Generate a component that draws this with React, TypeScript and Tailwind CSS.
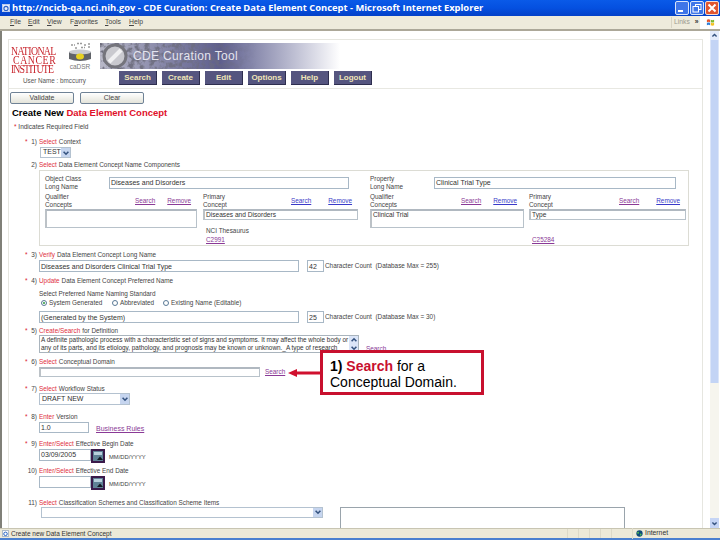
import React from "react";

const navItems = ["Search", "Create", "Edit", "Options", "Help", "Logout"];
const menuItems = [
  { label: "File", u: 0, w: "w-[18px]" },
  { label: "Edit", u: 0, w: "w-[19px]" },
  { label: "View", u: 0, w: "w-[23px]" },
  { label: "Favorites", u: 1, w: "w-[35px]" },
  { label: "Tools", u: 0, w: "w-[24px]" },
  { label: "Help", u: 0, w: "w-[20px]" },
];

const inputCls =
  "border border-[#a8b8c6] bg-white text-[7px] leading-none text-[#333] px-[1px] flex items-center whitespace-nowrap overflow-hidden";
const boxCls =
  "border border-[#b8c2ca] border-t-2 border-l-2 border-t-[#b0b8c0] border-l-[#bcc2c7] bg-white text-[6.6px] leading-[8px] text-[#333] px-[1px]";

const Visited = ({ children }: { children: React.ReactNode }) => (
  <span className="underline text-[#8a3a96]">{children}</span>
);
const Blue = ({ children }: { children: React.ReactNode }) => (
  <span className="underline text-[#3a3ac8]">{children}</span>
);

// the numbered label above each form field
const Label = ({
  num,
  req,
  verb,
  text,
  className,
}: {
  num: string;
  req?: boolean;
  verb: string;
  text: string;
  className: string;
}) => (
  <div className={`flex items-center text-[6.4px] leading-none text-[#444] whitespace-nowrap ${className}`}>
    <span className="w-[6px] text-[#d8202c]">{req ? "*" : ""}</span>
    <span className="w-[6px] flex justify-end">{num}</span>
    <span className="ml-[2px] text-[#e03040]">{verb}</span>
    <span className="ml-[2px]">{text}</span>
  </div>
);

const Chevron = ({ className }: { className: string }) => (
  <svg viewBox="0 0 10 10" className={className} fill="none" stroke="#34527f" strokeWidth="2">
    <path d="M2 3.5 L5 6.5 L8 3.5" />
  </svg>
);

const Select = ({ text, className }: { text: string; className: string }) => (
  <div className={`flex items-center border border-[#b4c2d0] bg-white text-[7px] text-[#333] ${className}`}>
    <span className="flex-1 pl-[2px] whitespace-nowrap overflow-hidden">{text}</span>
    <span className="w-[9px] self-stretch bg-[#c6d5ef] flex items-center justify-center">
      <Chevron className="w-[8px] h-[8px]" />
    </span>
  </div>
);

const CalendarButton = () => (
  <div className="w-[14px] h-[14px] border-2 border-[#3a1a4a] bg-[#5f8296] flex items-end justify-end">
    <svg viewBox="0 0 10 10" className="w-[10px] h-[10px]">
      <rect x="1" y="1" width="8" height="3" fill="#b8d0dc" />
      <path d="M4 9 L7 5.5 L10 9 Z" fill="#101820" />
    </svg>
  </div>
);

const Concepts = ({
  q,
  p,
  code,
  thesaurus,
  qLabelW,
  pLabelW,
  qW,
  pW,
  gap,
  qLinks,
  pLinks,
}: {
  q: string;
  p: string;
  code: string;
  thesaurus?: boolean;
  qLabelW: string;
  pLabelW: string;
  qW: string;
  pW: string;
  gap: string;
  qLinks: React.ReactNode;
  pLinks: React.ReactNode;
}) => (
  <div className={`flex ${gap} mt-[4px] text-[6.4px] leading-[8px] text-[#444]`}>
    <div className={`flex flex-col ${qW}`}>
      <div className="flex items-center h-[16px]">
        <span className={qLabelW}>
          Qualifier
          <br />
          Concepts
        </span>
        {qLinks}
      </div>
      <div className={`${boxCls} h-[19px]`}>{q}</div>
    </div>
    <div className={`flex flex-col ${pW}`}>
      <div className="flex items-center h-[16px]">
        <span className={pLabelW}>
          Primary
          <br />
          Concept
        </span>
        {pLinks}
      </div>
      <div className={`${boxCls} h-[11px]`}>{p}</div>
      <div className="h-[8px] mt-[7px] pl-[3px]">{thesaurus ? "NCI Thesaurus" : ""}</div>
      <div className="h-[8px] mt-[1px] pl-[3px]">
        <Visited>{code}</Visited>
      </div>
    </div>
  </div>
);

const TitleBar = () => (
  <div className="h-[16px] flex items-center bg-gradient-to-b from-[#0a5ae8] via-[#0550e0] to-[#0441c8] shrink-0">
    <svg viewBox="0 0 10 10" className="w-[8px] h-[8px] ml-[2px]">
      <rect x="0.5" y="0.5" width="9" height="9" fill="#e8eefc" stroke="#c8d4ee" />
      <circle cx="5" cy="5.5" r="2.6" fill="none" stroke="#2a60c8" strokeWidth="1.4" />
    </svg>
    <span
      className="ml-[2px] flex-1 text-[9.4px] font-bold text-white whitespace-nowrap"
      style={{ fontFamily: '"Open Sans", sans-serif' }}
    >
      http://ncicb-qa.nci.nih.gov - CDE Curation: Create Data Element Concept - Microsoft Internet Explorer
    </span>
    <div className="flex gap-[1px] pr-[1px]">
      <div className="w-[14px] h-[14px] rounded-[2px] bg-[#3f76e8] border border-[#d8e4fa] flex items-end pl-[2px] pb-[2px]">
        <div className="w-[5px] h-[2px] bg-white" />
      </div>
      <div className="w-[14px] h-[14px] rounded-[2px] bg-[#3f76e8] border border-[#d8e4fa] flex items-center justify-center">
        <svg viewBox="0 0 10 10" className="w-[10px] h-[10px]" fill="none" stroke="#fff" strokeWidth="1">
          <rect x="3.5" y="1.5" width="5.5" height="5" />
          <rect x="1" y="3.5" width="5.5" height="5.5" fill="#3f76e8" />
        </svg>
      </div>
      <div className="w-[14px] h-[14px] rounded-[2px] bg-[#e0552f] border border-[#f5dcd2] flex items-center justify-center">
        <svg viewBox="0 0 10 10" className="w-[10px] h-[10px]" fill="none" stroke="#fff" strokeWidth="2">
          <path d="M1.5 1.5 L8.5 8.5 M8.5 1.5 L1.5 8.5" />
        </svg>
      </div>
    </div>
  </div>
);

const MenuBar = () => (
  <div className="h-[15px] flex items-center bg-[#eeebdc] border-b-2 border-[#aca899] shrink-0 text-[6.8px] text-[#444]">
    <div className="flex pl-[10px] flex-1">
      {menuItems.map((m) => (
        <span key={m.label} className={m.w}>
          {m.label.slice(0, m.u)}
          <span className="underline">{m.label[m.u]}</span>
          {m.label.slice(m.u + 1)}
        </span>
      ))}
    </div>
    <span className="text-[#9a9a90] border-l border-[#d8d4c4] pl-[2px] w-[29px]">
      Links <b className="text-[#333] ml-[3px]">»</b>
    </span>
    <div className="w-[20px] h-full bg-white flex items-center justify-center">
      <svg viewBox="0 0 10 10" className="w-[9px] h-[9px]">
        <path d="M1 2 Q3 1 4.6 2 V4.6 Q3 3.6 1 4.6Z" fill="#e8552a" />
        <path d="M5.4 2 Q7 3 9 2 V4.6 Q7 5.6 5.4 4.6Z" fill="#7cb82f" />
        <path d="M1 5.4 Q3 4.4 4.6 5.4 V8 Q3 7 1 8Z" fill="#2f7fd8" />
        <path d="M5.4 5.4 Q7 6.4 9 5.4 V8 Q7 9 5.4 8Z" fill="#f4c020" />
      </svg>
    </div>
  </div>
);

const Logos = () => (
  <div className="flex h-[31px] pt-[3px]">
    <div
      className="ml-[2px] w-[46px] text-[#c8242c] text-[9.8px] leading-[7px] tracking-[-0.6px] pt-[2px] scale-y-[1.3] origin-top whitespace-nowrap"
      style={{ fontFamily: '"Liberation Serif", serif' }}
    >
      <div>NATIONAL</div>
      <div className="ml-[2px] tracking-[0.6px]">CANCER</div>
      <div className="tracking-[-0.9px]">INSTITUTE</div>
    </div>
    <div className="ml-[11px] w-[24px] flex flex-col items-center -mt-[1px]">
      <svg viewBox="0 0 24 21" className="w-[24px] h-[21px]">
        <path d="M3 3 h4 M9 1.5 h5 M16 3 h3 M21 1 v5 M7 6 h3 M13 5.5 h4" stroke="#9a9a9a" strokeWidth="1.5" fill="none" strokeDasharray="2 1" />
        <path d="M1 10 H23 V17 Q12 21 1 17Z" fill="#5f6268" />
        <ellipse cx="12" cy="10" rx="11" ry="2.5" fill="#c8cace" />
        <ellipse cx="12" cy="14.5" rx="4" ry="3" fill="#e6d020" />
      </svg>
      <span className="text-[6.5px] leading-[7px] text-[#777]">caDSR</span>
    </div>
    <div className="ml-[8px] relative w-[240px] h-[26px] overflow-hidden bg-gradient-to-r from-[#b8b8c8] via-[#5e5e8c] to-white flex items-center">
      <svg className="absolute inset-0 w-full h-full" viewBox="0 0 240 26">
        <defs>
          <filter id="grain">
            <feTurbulence type="fractalNoise" baseFrequency="0.2" numOctaves="3" seed="4" />
            <feColorMatrix values="0 0 0 0 0.15  0 0 0 0 0.15  0 0 0 0 0.2  4 0 0 0 -1.7" />
          </filter>
          <linearGradient id="fade" x1="0" x2="1">
            <stop offset="0" stopColor="#fff" stopOpacity="1" />
            <stop offset="0.42" stopColor="#fff" stopOpacity="0.7" />
            <stop offset="0.65" stopColor="#fff" stopOpacity="0" />
          </linearGradient>
          <mask id="fadeMask">
            <rect width="240" height="26" fill="url(#fade)" />
          </mask>
        </defs>
        <g mask="url(#fadeMask)">
          <rect width="240" height="26" filter="url(#grain)" />
        </g>
        <circle cx="15" cy="13" r="11" fill="#c9c9cf" stroke="#74747c" strokeWidth="3" />
        <path d="M9 19 L21 7" stroke="#f0f0f2" strokeWidth="4" />
      </svg>
      <span className="relative ml-[33px] text-[12px] text-[#e4e4ee] tracking-[0.35px] whitespace-nowrap">
        CDE Curation Tool
      </span>
    </div>
  </div>
);

const Header = () => (
  <div className="h-[49px] border-b border-[#e8e8e2] shrink-0">
    <Logos />
    <div className="flex items-start h-[17px]">
      <span className="ml-[14px] w-[96px] mt-[6px] text-[6.3px] leading-[8px] text-[#555] whitespace-nowrap">
        User Name : bmccurry
      </span>
      <div className="flex gap-[5px]">
        {navItems.map((n) => (
          <div
            key={n}
            className="w-[38px] h-[14px] bg-[#55557f] border-b border-r border-[#2e2e4e] flex items-center justify-center text-[8px] font-bold text-[#f0e6b8]"
          >
            {n}
          </div>
        ))}
      </div>
    </div>
  </div>
);

const ActionBtn = ({ label }: { label: string }) => (
  <div className="w-[64px] h-[12px] rounded-[2px] border border-[#6f8296] bg-gradient-to-b from-white to-[#e4e4da] flex items-center justify-center text-[7px] text-[#444]">
    {label}
  </div>
);

const ConceptBox = () => (
  <div className="ml-[30px] w-[650px] h-[76px] border border-[#dcdcd4] flex">
    <div className="w-[330px] pl-[5px] pt-[5px]">
      <div className="flex items-center h-[13px] text-[6.4px] leading-[8px] text-[#444]">
        <span className="w-[64px]">
          Object Class
          <br />
          Long Name
        </span>
        <div className={`${inputCls} w-[240px] h-[12px]`}>Diseases and Disorders</div>
      </div>
      <Concepts
        q=""
        p="Diseases and Disorders"
        code="C2991"
        thesaurus
        gap="gap-[6px]"
        qW="w-[152px]"
        pW="w-[155px]"
        qLabelW="w-[90px]"
        pLabelW="w-[88px]"
        qLinks={
          <span className="flex gap-[12px]">
            <Visited>Search</Visited>
            <Visited>Remove</Visited>
          </span>
        }
        pLinks={
          <span className="flex gap-[17px]">
            <Blue>Search</Blue>
            <Blue>Remove</Blue>
          </span>
        }
      />
    </div>
    <div className="flex-1 pt-[5px]">
      <div className="flex items-center h-[13px] text-[6.4px] leading-[8px] text-[#444]">
        <span className="w-[64px]">
          Property
          <br />
          Long Name
        </span>
        <div className={`${inputCls} w-[242px] h-[12px]`}>Clinical Trial Type</div>
      </div>
      <Concepts
        q="Clinical Trial"
        p="Type"
        code="C25284"
        gap="gap-[5px]"
        qW="w-[154px]"
        pW="w-[157px]"
        qLabelW="w-[91px]"
        pLabelW="w-[90px]"
        qLinks={
          <span className="flex gap-[12px]">
            <Visited>Search</Visited>
            <Blue>Remove</Blue>
          </span>
        }
        pLinks={
          <span className="flex gap-[17px]">
            <Visited>Search</Visited>
            <Blue>Remove</Blue>
          </span>
        }
      />
    </div>
  </div>
);

const Radio = ({ on, label, className }: { on?: boolean; label: string; className: string }) => (
  <span className={`flex items-center gap-[2px] ${className}`}>
    <span className="w-[6px] h-[6px] rounded-full border border-[#5a7a96] bg-white flex items-center justify-center">
      {on && <span className="w-[2px] h-[2px] rounded-full bg-[#2a9a3a]" />}
    </span>
    {label}
  </span>
);

const CountRow = ({ name, count, max, className }: { name: string; count: string; max: string; className: string }) => (
  <div className={`flex items-center ml-[30px] ${className}`}>
    <div className={`${inputCls} w-[260px] h-[12px]`}>{name}</div>
    <div className={`${inputCls} w-[17px] h-[12px] ml-[8px]`}>{count}</div>
    <span className="ml-[1px] text-[6.4px] text-[#444] whitespace-nowrap">Character Count &nbsp;(Database Max = {max})</span>
  </div>
);

const DateRow = ({ value, className }: { value: string; className: string }) => (
  <div className={`flex items-start ml-[30px] ${className}`}>
    <div className={`${inputCls} w-[52px] h-[12px]`}>{value}</div>
    <CalendarButton />
    <span className="ml-[4px] mt-[4px] text-[5.8px] leading-[8px] text-[#444]">MM/DD/YYYY</span>
  </div>
);

const Form = () => (
  <div className="flex-1 min-h-0">
    <div className="flex gap-[6px] ml-[1px] mt-[3px]">
      <ActionBtn label="Validate" />
      <ActionBtn label="Clear" />
    </div>
    <h1 className="ml-[3px] mt-[3px] h-[11px] text-[9.5px] leading-[11px] font-bold text-black whitespace-nowrap">
      Create New <span className="text-[#e0102a]">Data Element Concept</span>
    </h1>
    <div className="ml-[5px] mt-[5px] h-[8px] text-[6.5px] leading-[8px] text-[#444]">
      <span className="text-[#d8202c]">*</span> Indicates Required Field
    </div>

    <Label req num="1)" verb="Select" text="Context" className="ml-[16px] mt-[7px] h-[9px]" />
    <Select text="TEST" className="ml-[31px] w-[31px] h-[11px]" />

    <Label num="2)" verb="Select" text="Data Element Concept Name Components" className="ml-[16px] mt-[3px] h-[9px]" />
    <ConceptBox />

    <Label req num="3)" verb="Verify" text="Data Element Concept Long Name" className="ml-[16px] mt-[5px] h-[9px]" />
    <CountRow name="Diseases and Disorders Clinical Trial Type" count="42" max="255" className="" />

    <Label req num="4)" verb="Update" text="Data Element Concept Preferred Name" className="ml-[16px] mt-[5px] h-[9px]" />
    <div className="ml-[30px] mt-[3px] h-[9px] text-[6.4px] leading-[9px] text-[#444]">Select Preferred Name Naming Standard</div>
    <div className="ml-[32px] h-[10px] flex items-center text-[6.4px] text-[#444] whitespace-nowrap">
      <Radio on label="System Generated" className="w-[71px]" />
      <Radio label="Abbreviated" className="w-[51px]" />
      <Radio label="Existing Name (Editable)" className="" />
    </div>
    <CountRow name="(Generated by the System)" count="25" max="30" className="mt-[3px]" />

    <Label req num="5)" verb="Create/Search" text="for Definition" className="ml-[16px] mt-[4px] h-[8px]" />
    <div className="flex items-end ml-[30px]">
      <div className="relative w-[320px] h-[18px] border border-[#a9b4bd] bg-white text-[6.4px] leading-[8px] text-[#333] pl-[1px] pr-[10px] overflow-hidden whitespace-nowrap">
        A definite pathologic process with a characteristic set of signs and symptoms. It may affect the whole body or
        <br />
        any of its parts, and its etiology, pathology, and prognosis may be known or unknown._A type of research
        <div className="absolute right-0 top-0 bottom-0 w-[9px] bg-[#dbe5f8] flex flex-col items-center justify-between">
          <Chevron className="w-[8px] h-[8px] rotate-180" />
          <Chevron className="w-[8px] h-[8px]" />
        </div>
      </div>
      <span className="ml-[7px] text-[6.4px] leading-[8px]">
        <Visited>Search</Visited>
      </span>
    </div>

    <Label req num="6)" verb="Select" text="Conceptual Domain" className="ml-[16px] mt-[5px] h-[9px]" />
    <div className="flex items-center ml-[30px]">
      <div className={`${boxCls} w-[221px] h-[10px]`} />
      <span className="ml-[5px] text-[6.4px]">
        <Visited>Search</Visited>
      </span>
    </div>

    <Label req num="7)" verb="Select" text="Workflow Status" className="ml-[16px] mt-[8px] h-[8px]" />
    <Select text="DRAFT NEW" className="ml-[30px] w-[91px] h-[12px]" />

    <Label req num="8)" verb="Enter" text="Version" className="ml-[16px] mt-[8px] h-[8px]" />
    <div className="flex items-center ml-[30px]">
      <div className={`${inputCls} w-[50px] h-[11px]`}>1.0</div>
      <span className="ml-[7px] mt-[3px] text-[7px]">
        <Visited>Business Rules</Visited>
      </span>
    </div>

    <Label req num="9)" verb="Enter/Select" text="Effective Begin Date" className="ml-[16px] mt-[6px] h-[8px]" />
    <DateRow value="03/09/2005" className="h-[18px]" />

    <Label num="10)" verb="Enter/Select" text="Effective End Date" className="ml-[16px] h-[9px]" />
    <DateRow value="" className="h-[24px]" />

    <Label num="11)" verb="Select" text="Classification Schemes and Classification Scheme Items" className="ml-[16px] h-[7px]" />
    <div className="flex items-start ml-[32px]">
      <Select text="" className="w-[282px] h-[11px]" />
      <div className="ml-[17px] w-[285px] h-[40px] border border-[#9aa4ac] bg-white" />
    </div>
  </div>
);

const Scrollbar = () => (
  <div className="w-[9px] ml-[7px] mr-[1px] flex flex-col bg-[#f6f5ee]">
    <div className="h-[9px] bg-[#e4ecfb] flex items-center justify-center">
      <Chevron className="w-[7px] h-[7px] rotate-180" />
    </div>
    <div className="h-[343px] bg-[#c3d4f5] border-x border-[#dbe5f8]" />
    <div className="flex-1" />
    <div className="h-[10px] bg-[#c6d5f5] flex items-center justify-center">
      <Chevron className="w-[7px] h-[7px]" />
    </div>
  </div>
);

const StatusBar = () => (
  <div className="h-[12px] bg-[#ece9d8] border-t border-[#c8c5b2] border-b-2 border-b-[#4a80d0] flex items-center text-[6.5px] text-[#333] shrink-0 relative">
    <svg viewBox="0 0 10 10" className="w-[7px] h-[7px] ml-[2px]">
      <rect x="1" y="0.5" width="8" height="9" fill="#fff" stroke="#8aa0b8" />
      <circle cx="5" cy="5.5" r="2.5" fill="none" stroke="#1f5fc0" strokeWidth="1.4" />
    </svg>
    <span className="ml-[2px] flex-1">Create new Data Element Concept</span>
    <div className="flex h-full">
      <span className="w-[11px] border-l border-[#dcd9c8]" />
      <span className="w-[11px] border-l border-[#dcd9c8]" />
      <span className="w-[11px] border-l border-[#dcd9c8]" />
      <span className="w-[11px] border-l border-[#dcd9c8]" />
      <span className="w-[21px] border-l border-[#dcd9c8]" />
    </div>
    <span className="w-[88px] flex items-center gap-[2px] border-l border-[#dcd9c8] pl-[3px] text-[6.8px]">
      <svg viewBox="0 0 10 10" className="w-[7px] h-[7px]">
        <circle cx="5" cy="5" r="4.5" fill="#0e4a7a" />
        <path d="M3 2 Q5 3 4 5 Q2 6 1.5 4Z M6 5 Q8 5 8 7 Q6 8.5 5.5 7Z" fill="#4fc34f" />
      </svg>
      Internet
    </span>
  </div>
);

const Callout = () => (
  <div className="absolute left-[286px] top-[319px] flex items-center">
    <svg viewBox="0 0 32 10" className="w-[32px] h-[10px] mt-[1px]">
      <path d="M0 5 L9 1 L9 3.6 L32 3.6 L32 6.4 L9 6.4 L9 9 Z" fill="#d0102e" />
    </svg>
    <div className="w-[164px] h-[45px] border-[3px] border-[#c8102e] bg-white pl-[7px] pt-[5px] text-[14px] leading-[16px] text-black whitespace-nowrap">
      <b>
        1) <span className="text-[#c8102e]">Search</span>
      </b>{" "}
      for a
      <br />
      Conceptual Domain.
    </div>
  </div>
);

export default function App() {
  return (
    <div
      className="w-[720px] h-[540px] flex flex-col overflow-hidden bg-white"
      style={{ fontFamily: '"Liberation Sans", Arial, sans-serif' }}
    >
      <TitleBar />
      <MenuBar />
      <div className="relative flex-1 min-h-0 flex border-l-2 border-l-[#808078]">
        <div className="flex-1 min-w-0 flex flex-col pl-[6px] pt-[8px]">
          <div className="flex-1 min-h-0 flex flex-col border-l border-r border-t border-[#e6e6e0] overflow-hidden">
            <Header />
            <Form />
          </div>
        </div>
        <Scrollbar />
        <Callout />
      </div>
      <StatusBar />
    </div>
  );
}
